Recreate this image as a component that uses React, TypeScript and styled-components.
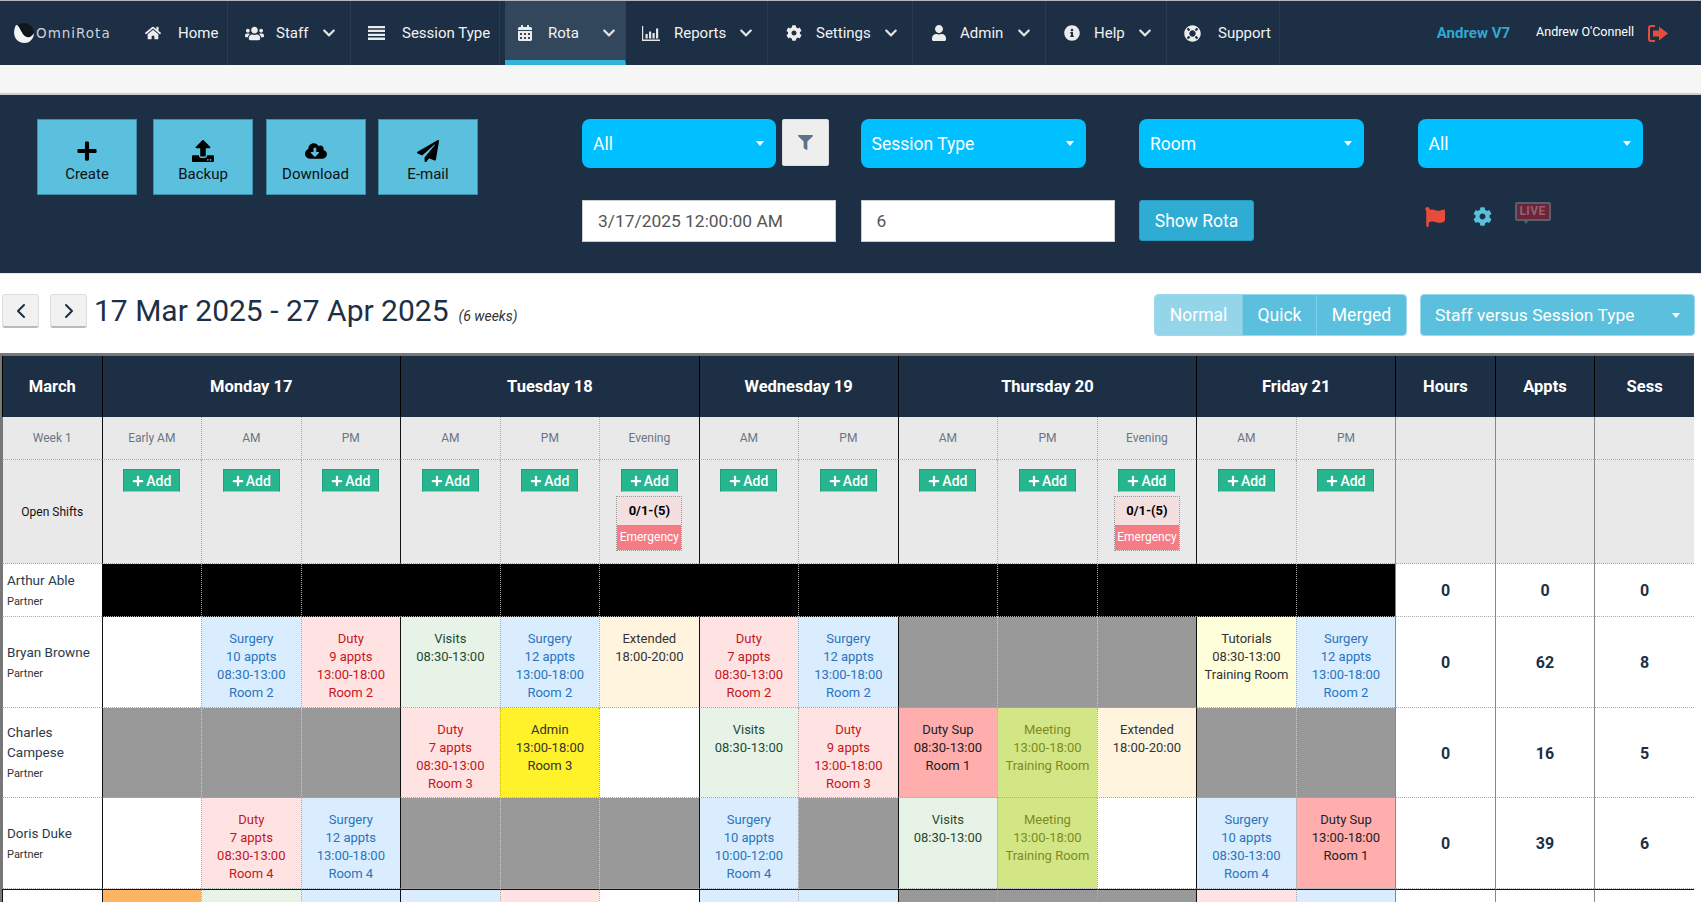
import React from "react";
import styled, { createGlobalStyle } from "styled-components";
import { ChevronLeft, ChevronRight } from "lucide-react";
import {
  FaHome, FaUsers, FaCalendarAlt, FaCog, FaUser, FaInfoCircle, FaLifeRing, FaChevronDown,
  FaPlus, FaUpload, FaCloudDownloadAlt, FaPaperPlane, FaFilter, FaFlag,
} from "react-icons/fa";

const navy = "#1d2f45";

const Global = createGlobalStyle`
  html, body { margin: 0; padding: 0; height: 902px; overflow: hidden; background: #fff; }
  body, input, button { font-family: Roboto, "Liberation Sans", sans-serif; }
  * { box-sizing: border-box; }
`;

const Navbar = styled.nav`
  display: flex; height: 65px; background: ${navy}; border-top: 1px solid #b9b6c4; color: #f2f2f2;
`;
const Brand = styled.div`
  width: 133px; display: flex; align-items: center; padding-left: 13px; gap: 1px;
`;
const BrandText = styled.span`
  font-family: "DejaVu Sans", sans-serif; font-size: 13.5px; letter-spacing: 1px; color: #cdd2d7;
`;
const NavItem = styled.div<{ $w: number; $pad: number; $active?: boolean }>`
  width: ${(p) => p.$w}px; display: flex; align-items: center; padding-left: ${(p) => p.$pad}px;
  padding-right: ${(p) => (p.$active ? 9 : 14)}px; font-size: 15px; height: 64px; white-space: nowrap;
  border-right: 1px solid ${(p) => (p.$active ? "transparent" : "#2a3c51")};
  margin-left: ${(p) => (p.$active ? 5 : 0)}px;
  background: ${(p) => (p.$active ? "#33475c" : "transparent")};
  border-bottom: ${(p) => (p.$active ? "5px solid #33b1d6" : "0")};
  padding-top: ${(p) => (p.$active ? 5 : 0)}px;
`;
const NavIcon = styled.span<{ $w: number }>`
  width: ${(p) => p.$w}px; display: flex; align-items: center; font-size: 16px; color: #ececec; flex: none;
`;
const NavChevron = styled.span`
  margin-left: auto; display: flex; font-size: 14px; color: #e4e4e4;
`;
const NavRight = styled.div`
  margin-left: auto; display: flex; align-items: center; padding-right: 33px;
`;
const Practice = styled.span`
  font-size: 15px; font-weight: 700; color: #2fa9d2; margin-right: 26px;
`;
const UserName = styled.span`
  font-size: 12.5px; color: #fff; margin-right: 14px; margin-top: -3px;
`;
const Strip = styled.div`
  height: 30px; background: #f6f6f6; border-bottom: 2px solid #ccd0d4;
`;
const Panel = styled.section`
  height: 178px; background: ${navy}; display: flex; padding: 24px 0 0 37px;
`;
const ActionGroup = styled.div`
  display: flex; gap: 12.5px; width: 545px; align-items: flex-start;
`;
const ActionButton = styled.button<{ $mr?: number }>`
  width: 100px; height: 76px; background: #5bc0de; border: 1px solid #3d8fab; color: #111;
  font-size: 15px; padding: 0; margin-right: ${(p) => p.$mr ?? 0}px;
  display: flex; flex-direction: column; align-items: center; justify-content: flex-start;
  svg { font-size: 22px; margin-top: 20px; margin-bottom: 3px; color: #000; }
`;
const Filters = styled.div`
  display: grid; grid-template-columns: 278.5px 278.5px 278.5px 240px; grid-template-rows: 49px 42px; row-gap: 32px; align-content: start;
`;
const FilterCell = styled.div`
  display: flex; gap: 6px; align-items: flex-start;
`;
const Select = styled.div<{ $w: number }>`
  width: ${(p) => p.$w}px; height: 49px; background: #00c0ff; color: #fff; border-radius: 8px; font-size: 17.5px;
  display: flex; align-items: center; justify-content: space-between; padding: 0 12px 0 11px;
`;
const Caret = styled.span`
  width: 0; height: 0; border-left: 4.5px solid transparent; border-right: 4.5px solid transparent; border-top: 5px solid #fff;
`;
const FilterButton = styled.button`
  width: 47px; height: 47px; background: #eee; border: 1px solid #ddd; border-radius: 2px; color: #5d7287; font-size: 15px;
  display: flex; align-items: center; justify-content: center; padding: 0;
`;
const TextInput = styled.input`
  width: 254px; height: 42px; border: 1px solid #ccc; background: #fff; color: #555; font-size: 17.4px; padding: 0 0 0 15px; outline: none;
  border-radius: 0;
`;
const ShowButton = styled.button`
  width: 115px; height: 41px; background: #2eacd3; border: 1px solid #269abc; border-radius: 3px; color: #fff; font-size: 17.5px; padding: 0;
`;
const StatusIcons = styled.div`
  display: flex; align-items: flex-start; padding: 2px 0 0 7px;
`;
const FlagIcon = styled.span`
  color: #e74c3c; font-size: 20px; display: flex; margin: 5px 28px 0 0;
`;
const GearIcon = styled.span`
  color: #5bc0de; font-size: 19px; display: flex; margin: 5px 23px 0 0;
`;
const LiveBadge = styled.span`
  position: relative; width: 36px; height: 19px; background: #6e2338; border: 2px solid #56606f; border-radius: 2px;
  color: #8d6470; font-size: 12px; font-weight: 700; letter-spacing: 0.4px; text-align: center; line-height: 15px;
  &::after {
    content: ""; position: absolute; left: 6px; bottom: -5px; width: 0; height: 0;
    border-left: 3px solid transparent; border-right: 3px solid transparent; border-top: 4px solid #56606f;
  }
`;
const Toolbar = styled.div`
  height: 80px; display: flex; align-items: flex-start; padding: 20px 6px 0 2px; border-top: 1px solid #e4e6e9;
`;
const Arrow = styled.button<{ $mr: number }>`
  width: 37px; height: 34px; margin-right: ${(p) => p.$mr}px; background: #f1f1f1; border: 1px solid #ddd; border-bottom: 2px solid #bbb;
  border-radius: 3px; color: #1d2f45; display: flex; align-items: center; justify-content: center; padding: 0;
`;
const Title = styled.h1`
  margin: -3px 0 0; font-size: 30px; line-height: 40px; font-weight: 400; color: ${navy};
`;
const Weeks = styled.em`
  font-size: 14px; color: #333; margin: 12px 0 0 10px; line-height: 20px;
`;
const ToggleGroup = styled.div`
  margin-left: auto; display: flex; height: 42px; border-radius: 4px; overflow: hidden; border: 1px solid #9bd9ec;
`;
const Toggle = styled.div<{ $w: number; $on?: boolean }>`
  width: ${(p) => p.$w}px; background: ${(p) => (p.$on ? "#95d5ea" : "#5bc0de")}; color: #fff; font-size: 17.5px;
  display: flex; align-items: center; justify-content: center;
  & + & { border-left: 1px solid #7dcde5; }
`;
const ViewSelect = styled.div`
  width: 275px; height: 42px; margin-left: 13px; background: #5bc0de; border: 1px solid #9bd9ec; border-radius: 4px;
  color: #fff; font-size: 17.4px; display: flex; align-items: center; justify-content: space-between; padding: 0 14px 0 14px;
`;
const Rota = styled.table`
  width: 1694px; margin-left: 0; table-layout: fixed; border-collapse: separate; border-spacing: 0;
  border-top: 3px solid #777; border-left: 2px solid #777;
`;
const HeadCell = styled.th`
  height: 61px; background: ${navy}; color: #fff; font-size: 16.5px; font-weight: 700; padding: 0; text-align: center;
  border-left: 1px solid #000;
`;
const Cell = styled.td<{ $bg?: string; $fg?: string; $solid?: boolean; $rule?: string; $top?: boolean }>`
  background: ${(p) => p.$bg ?? "#fff"}; color: ${(p) => p.$fg ?? "#333"};
  border-left: 1px ${(p) => (p.$solid ? "solid" : "dotted")} ${(p) => p.$rule ?? (p.$solid ? "#111" : "#aaa")};
  border-bottom: 1px dotted #aaa;
  border-top: ${(p) => (p.$top ? "1px solid #111" : "0")};
  padding: 0; font-size: 13px; line-height: 18px; text-align: center; vertical-align: top;
`;
const SessionBody = styled.div`
  padding-top: 13px;
`;
const SubLabel = styled(Cell)`
  background: #e9e9e9; color: #6a7686; font-size: 12px; vertical-align: middle;
`;
const OpenCell = styled(Cell)`
  background: #e9e9e9; padding-top: 9px;
`;
const OpenLabel = styled(Cell)`
  background: #e9e9e9; color: #111; font-size: 12px; vertical-align: middle;
`;
const AddButton = styled.button`
  width: 57px; height: 23px; background: #26b58f; border: 1px solid #1f9e7d; border-bottom-color: #8fcfc0; border-radius: 0; color: #fff;
  font-size: 14px; font-weight: 500; padding: 0; display: inline-flex; align-items: center; justify-content: center; gap: 2px;
  svg { font-size: 12px; }
`;
const ShiftCard = styled.div`
  width: 66px; margin: 4px auto 0; border: 1px dotted #999;
`;
const ShiftCount = styled.div`
  height: 28px; background: #f3dfe0; color: #000; font-weight: 700; font-size: 13px; line-height: 27px;
`;
const ShiftTag = styled.div`
  height: 25px; background: #f57c85; color: #fff; font-size: 12px; line-height: 23px; border-top: 1px dotted #999;
`;
const NameCell = styled(Cell)`
  text-align: left; padding: 0 0 2px 4px; vertical-align: middle; color: #2b3b4c; font-size: 13.5px; line-height: 20px;
`;
const Role = styled.div`
  font-size: 11px; color: #333; line-height: 14px; margin-top: 5px;
`;
const TotalCell = styled(Cell)`
  font-size: 16px; font-weight: 700; color: ${navy}; vertical-align: middle; padding-top: 2px;
`;
const Row = styled.tr<{ $h: number }>`
  height: ${(p) => p.$h}px;
`;

const ChartIcon = () => (
  <svg width="18" height="15" viewBox="0 0 18 15" fill="#e6e6e6">
    <path d="M0 0h1.2v13.6H18V15H0z" />
    <path d="M3.5 8h2.2v4.6H3.5zM7 5.5h2.2v7.1H7zM10.5 7h2.2v5.6h-2.2zM14 2.5h2.2v10.1H14z" />
  </svg>
);
const ListIcon = () => (
  <svg width="17" height="14" viewBox="0 0 17 14" fill="#ececec">
    <path d="M0 0h17v2.3H0zM0 3.8h17v2.3H0zM0 7.7h17V10H0zM0 11.6h17V14H0z" />
  </svg>
);
const SignOut = () => (
  <svg width="20" height="17" viewBox="0 0 20 17">
    <path d="M7 1H3a2 2 0 0 0-2 2v11a2 2 0 0 0 2 2h4" fill="none" stroke="#e74c3c" strokeWidth="2" />
    <path d="M5 5.5h6V1.5L20 8.5l-9 7v-4H5z" fill="#e74c3c" />
  </svg>
);
const Logo = () => (
  <svg width="22" height="22" viewBox="0 0 22 22">
    <circle cx="11" cy="11" r="10" fill="#10161e" />
    <path d="M3 3C1 7 0 12 3 17c3 4 9 5 13 3 3-2 5-5 5-9-2 3-4 5-7 4C10 14 9 10 7 7 6 5 5 3 3 3z" fill="#f4f4f4" />
  </svg>
);

type Nav = { label: string; icon: React.ReactNode; w: number; pad: number; iw: number; chev?: boolean; active?: boolean };
const navItems: Nav[] = [
  { label: "Home", icon: <FaHome />, w: 95, pad: 12, iw: 33 },
  { label: "Staff", icon: <FaUsers style={{ fontSize: 19 }} />, w: 123, pad: 17, iw: 31, chev: true },
  { label: "Session Type", icon: <ListIcon />, w: 149, pad: 17, iw: 34 },
  { label: "Rota", icon: <FaCalendarAlt />, w: 121, pad: 12, iw: 31, chev: true, active: true },
  { label: "Reports", icon: <ChartIcon />, w: 142, pad: 16, iw: 32, chev: true },
  { label: "Settings", icon: <FaCog />, w: 145, pad: 18, iw: 30, chev: true },
  { label: "Admin", icon: <FaUser />, w: 133, pad: 18, iw: 29, chev: true },
  { label: "Help", icon: <FaInfoCircle />, w: 121, pad: 18, iw: 30, chev: true },
  { label: "Support", icon: <FaLifeRing style={{ fontSize: 17 }} />, w: 113, pad: 17, iw: 34 },
];

const palette: Record<string, [string, string]> = {
  Surgery: ["#d9edff", "#2a74bd"],
  Duty: ["#ffe3e3", "#c4161c"],
  Visits: ["#e8f3e8", "#1f4a30"],
  Extended: ["#fff4de", "#333"],
  Admin: ["#fff12a", "#333"],
  "Duty Sup": ["#ffadad", "#222"],
  Meeting: ["#d3e686", "#7b8c22"],
  Tutorials: ["#fffedb", "#333"],
};

type Slot = string[] | "x" | "-" | "b";
const S = (appts: number, time: string, room: string): string[] => ["Surgery", `${appts} appts`, time, room];
const D = (appts: number, time: string, room: string): string[] => ["Duty", `${appts} appts`, time, room];
const AM = "08:30-13:00";
const PM = "13:00-18:00";
const visits = ["Visits", AM];
const ext = ["Extended", "18:00-20:00"];
const meeting = ["Meeting", PM, "Training Room"];

type Person = { name: string; h: number; slots: Slot[]; totals: number[] };
const people: Person[] = [
  { name: "Arthur Able", h: 53, slots: Array(13).fill("b"), totals: [0, 0, 0] },
  { name: "Bryan Browne", h: 91, totals: [0, 62, 8], slots: ["-", S(10, AM, "Room 2"), D(9, PM, "Room 2"), visits, S(12, PM, "Room 2"), ext, D(7, AM, "Room 2"), S(12, PM, "Room 2"), "x", "x", "x", ["Tutorials", AM, "Training Room"], S(12, PM, "Room 2")] },
  { name: "Charles Campese", h: 90, totals: [0, 16, 5], slots: ["x", "x", "x", D(7, AM, "Room 3"), ["Admin", PM, "Room 3"], "-", visits, D(9, PM, "Room 3"), ["Duty Sup", AM, "Room 1"], meeting, ext, "x", "x"] },
  { name: "Doris Duke", h: 91, totals: [0, 39, 6], slots: ["-", D(7, AM, "Room 4"), S(12, PM, "Room 4"), "x", "x", "x", S(10, "10:00-12:00", "Room 4"), "x", visits, meeting, "-", S(10, AM, "Room 4"), ["Duty Sup", PM, "Room 1"]] },
];
const lastRow = ["#ffb463", "#e8f3e8", "#d9edff", "#d9edff", "#ffe3e3", "#fff", "#d9edff", "#d9edff", "#999", "#999", "#999", "#ffe3e3", "#d9edff"];

const dayStarts = new Set([0, 3, 6, 8, 11]);
const sessions = ["Early AM", "AM", "PM", "AM", "PM", "Evening", "AM", "PM", "AM", "PM", "Evening", "AM", "PM"];
const emergency = new Set([5, 10]);

const SlotCell = ({ slot, i }: { slot: Slot; i: number }) => {
  const solid = dayStarts.has(i);
  if (slot === "b") return <Cell $bg="#000" $solid={solid} $rule={solid ? "#000" : "#aaa"} />;
  if (slot === "x") return <Cell $bg="#999" $solid={solid} $rule={solid ? "#111" : "#ccc"} />;
  if (slot === "-") return <Cell $solid={solid} />;
  const [bg, fg] = palette[slot[0]];
  return (
    <Cell $bg={bg} $fg={fg} $solid={solid}>
      <SessionBody>
        {slot.map((line) => (
          <div key={line}>{line}</div>
        ))}
      </SessionBody>
    </Cell>
  );
};

export default function App() {
  return (
    <>
      <Global />
      <Navbar>
        <Brand>
          <Logo />
          <BrandText>OmniRota</BrandText>
        </Brand>
        {navItems.map((n) => (
          <NavItem key={n.label} $w={n.w} $pad={n.pad} $active={n.active}>
            <NavIcon $w={n.iw}>{n.icon}</NavIcon>
            <span>{n.label}</span>
            {n.chev && (
              <NavChevron>
                <FaChevronDown />
              </NavChevron>
            )}
          </NavItem>
        ))}
        <NavRight>
          <Practice>Andrew V7</Practice>
          <UserName>Andrew O'Connell</UserName>
          <SignOut />
        </NavRight>
      </Navbar>
      <Strip />
      <Panel>
        <ActionGroup>
          <ActionButton $mr={3.5}><FaPlus />Create</ActionButton>
          <ActionButton><FaUpload />Backup</ActionButton>
          <ActionButton><FaCloudDownloadAlt />Download</ActionButton>
          <ActionButton><FaPaperPlane />E-mail</ActionButton>
        </ActionGroup>
        <Filters>
          <FilterCell>
            <Select $w={194}>All<Caret /></Select>
            <FilterButton><FaFilter /></FilterButton>
          </FilterCell>
          <FilterCell><Select $w={225}>Session Type<Caret /></Select></FilterCell>
          <FilterCell><Select $w={225}>Room<Caret /></Select></FilterCell>
          <FilterCell><Select $w={225}>All<Caret /></Select></FilterCell>
          <FilterCell><TextInput readOnly value="3/17/2025 12:00:00 AM" /></FilterCell>
          <FilterCell><TextInput readOnly value="6" /></FilterCell>
          <FilterCell><ShowButton>Show Rota</ShowButton></FilterCell>
          <StatusIcons>
            <FlagIcon><FaFlag /></FlagIcon>
            <GearIcon><FaCog /></GearIcon>
            <LiveBadge>LIVE</LiveBadge>
          </StatusIcons>
        </Filters>
      </Panel>
      <Toolbar>
        <Arrow $mr={11}><ChevronLeft size={24} strokeWidth={2} /></Arrow>
        <Arrow $mr={7}><ChevronRight size={24} strokeWidth={2} /></Arrow>
        <Title>17 Mar 2025 - 27 Apr 2025</Title>
        <Weeks>(6 weeks)</Weeks>
        <ToggleGroup>
          <Toggle $w={87} $on>Normal</Toggle>
          <Toggle $w={74}>Quick</Toggle>
          <Toggle $w={90}>Merged</Toggle>
        </ToggleGroup>
        <ViewSelect>Staff versus Session Type<Caret /></ViewSelect>
      </Toolbar>
      <Rota>
        <thead>
          <tr>
            <HeadCell>March</HeadCell>
            <HeadCell colSpan={3}>Monday 17</HeadCell>
            <HeadCell colSpan={3}>Tuesday 18</HeadCell>
            <HeadCell colSpan={2}>Wednesday 19</HeadCell>
            <HeadCell colSpan={3}>Thursday 20</HeadCell>
            <HeadCell colSpan={2}>Friday 21</HeadCell>
            <HeadCell>Hours</HeadCell>
            <HeadCell>Appts</HeadCell>
            <HeadCell>Sess</HeadCell>
          </tr>
        </thead>
        <tbody>
          <Row $h={43}>
            <SubLabel $solid $rule="#777">Week 1</SubLabel>
            {sessions.map((s, i) => (
              <SubLabel key={i} $solid={dayStarts.has(i)}>{s}</SubLabel>
            ))}
            {[0, 1, 2].map((i) => <SubLabel key={i} $solid $rule="#888" />)}
          </Row>
          <Row $h={104}>
            <OpenLabel $solid $rule="#777">Open Shifts</OpenLabel>
            {sessions.map((_, i) => (
              <OpenCell key={i} $solid={dayStarts.has(i)}>
                <AddButton><FaPlus />Add</AddButton>
                {emergency.has(i) && (
                  <ShiftCard>
                    <ShiftCount>0/1-(5)</ShiftCount>
                    <ShiftTag>Emergency</ShiftTag>
                  </ShiftCard>
                )}
              </OpenCell>
            ))}
            {[0, 1, 2].map((i) => <SubLabel key={i} $solid $rule="#888" />)}
          </Row>
          {people.map((p) => (
            <Row key={p.name} $h={p.h}>
              <NameCell $solid $rule="#777">
                {p.name}
                <Role>Partner</Role>
              </NameCell>
              {p.slots.map((s, i) => (
                <SlotCell key={i} slot={s} i={i} />
              ))}
              {p.totals.map((t, i) => (
                <TotalCell key={i} $solid $rule="#888">{t}</TotalCell>
              ))}
            </Row>
          ))}
          <Row $h={40}>
            <Cell $solid $rule="#111" $top />
            {lastRow.map((bg, i) => (
              <Cell key={i} $bg={bg} $solid={dayStarts.has(i)} $top />
            ))}
            {[0, 1, 2].map((i) => <Cell key={i} $solid $rule="#888" $top />)}
          </Row>
        </tbody>
      </Rota>
    </>
  );
}
